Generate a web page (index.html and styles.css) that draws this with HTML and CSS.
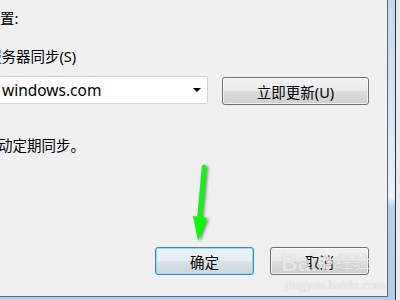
FILE: index.html
```html
<!DOCTYPE html>
<html lang="zh-CN">
<head>
    <meta charset="UTF-8">
    <title>Internet 时间设置</title>
    <link rel="stylesheet" href="styles.css">
</head>
<body>

    <div class="screen">
        <div class="window">
            <div class="client">
                <p class="label first">置:</p>
                <p class="label sync-label">服务器同步(S)</p>

                <div class="server-row">
                    <div class="combo">
                        <span class="combo-text">windows.com</span>
                        <span class="combo-arrow"></span>
                    </div>
                    <button class="btn update-btn">立即更新(U)</button>
                </div>

                <p class="label note">动定期同步。</p>

                <div class="footer">
                    <button class="btn btn-default">确定</button>
                    <button class="btn">取消</button>
                </div>

                <!-- annotation arrow -->
                <svg class="arrow" width="30" height="90" viewBox="0 0 30 90">
                    <path d="M16 7 L11 62" stroke="#00ff00" stroke-width="4.5" stroke-linecap="round" fill="none"/>
                    <path d="M5 56 L19 58 L10 81 Z" fill="#00ff00"/>
                </svg>

                <!-- watermark -->
                <div class="watermark">
                    <div class="wm-logo"><span>Bai</span><span class="paw">&#x2741;</span><span class="wm-cn">经验</span></div>
                    <div class="wm-url">jingyan.baidu.com</div>
                </div>
            </div>
        </div>
        <div class="desk"></div>
    </div>

</body>
</html>
```

FILE: styles.css
```css
/* Reset */
* {
    margin: 0;
    padding: 0;
    box-sizing: border-box;
}

body {
    width: 400px;
    height: 300px;
    overflow: hidden;
    background-color: #e9e9e9;
    font-family: 'Noto Sans', 'Noto Sans CJK SC', sans-serif;
    font-size: 14.5px;
    color: #000;
}

/* Window frame */
.screen {
    display: flex;
    height: 300px;
}

.window {
    width: 396px;
    height: 300px;
    padding: 0 7px 3px 0;
    border-right: 1px solid #28313c;
    background: linear-gradient(to bottom, #c4d9ef 0%, #d8e6f5 40%, #eaf2fb 66%, #b3cfec 69%, #b2cdea 100%);
}

.desk {
    flex: 1;
    background-color: #ebebeb;
}

.client {
    position: relative;
    display: flex;
    flex-direction: column;
    width: 388px;
    height: 297px;
    padding-bottom: 21px;
    background-color: #f0f0f0;
    border-right: 1px solid #5b6877;
    border-bottom: 1px solid #5b6877;
    overflow: hidden;
}

/* Labels */
.label {
    line-height: 20px;
    white-space: nowrap;
}

.first {
    margin-top: 8px;
}

.sync-label {
    margin-top: 18px;
    margin-left: -13px;
}

.note {
    margin-top: 30px;
    margin-left: -2px;
}

/* Server row */
.server-row {
    display: flex;
    align-items: flex-start;
    gap: 14px;
    margin-top: 10px;
    padding-right: 18px;
}

.combo {
    flex: 1;
    display: flex;
    align-items: center;
    justify-content: space-between;
    height: 28px;
    margin-left: -4px;
    padding: 0 6px 0 5px;
    background-color: #fff;
    border: 1px solid #d4d4d4;
    border-radius: 2px;
}

.combo-text {
    font-size: 15.5px;
}

.combo-arrow {
    width: 0;
    height: 0;
    border-left: 4px solid transparent;
    border-right: 4px solid transparent;
    border-top: 4px solid #000;
}

/* Buttons */
.btn {
    height: 28px;
    font-family: inherit;
    font-size: 14.5px;
    color: #000;
    border: 1px solid #707070;
    border-radius: 3px;
    background: linear-gradient(to bottom, #f2f2f2 0%, #ebebeb 48%, #dddddd 52%, #cfcfcf 100%);
    box-shadow: inset 0 0 0 1px rgba(255, 255, 255, 0.7);
}

.update-btn {
    width: 147px;
    margin-top: 1px;
}

.footer {
    display: flex;
    justify-content: flex-end;
    gap: 16px;
    margin-top: auto;
    padding-right: 18px;
}

.footer .btn {
    width: 99px;
}

.btn-default {
    border-color: #3c87c4;
    background: linear-gradient(to bottom, #eef4f7 0%, #e6eef2 48%, #d7e2e8 52%, #ccd8de 100%);
    box-shadow: inset 0 0 0 1px #8fdcf6;
}

/* Annotation arrow */
.arrow {
    position: absolute;
    left: 188px;
    top: 160px;
    filter: drop-shadow(2px 1px 1.5px rgba(0, 0, 0, 0.45));
}

/* Watermark */
.watermark {
    position: absolute;
    left: 281px;
    top: 251px;
    color: rgba(255, 255, 255, 0.7);
    text-shadow: 0 0 1px rgba(120, 120, 120, 0.45);
    pointer-events: none;
}

.wm-logo {
    display: flex;
    align-items: center;
    font-family: 'Liberation Sans', 'Noto Sans CJK SC', sans-serif;
    font-size: 23px;
    font-weight: bold;
    line-height: 24px;
}

.paw {
    font-size: 18px;
    margin: 0 3px 0 1px;
}

.wm-cn {
    font-size: 17px;
    font-weight: normal;
}

.wm-url {
    margin-top: 3px;
    margin-left: 4px;
    font-family: 'Liberation Serif', serif;
    font-size: 13.5px;
    line-height: 14px;
    white-space: nowrap;
}
```
